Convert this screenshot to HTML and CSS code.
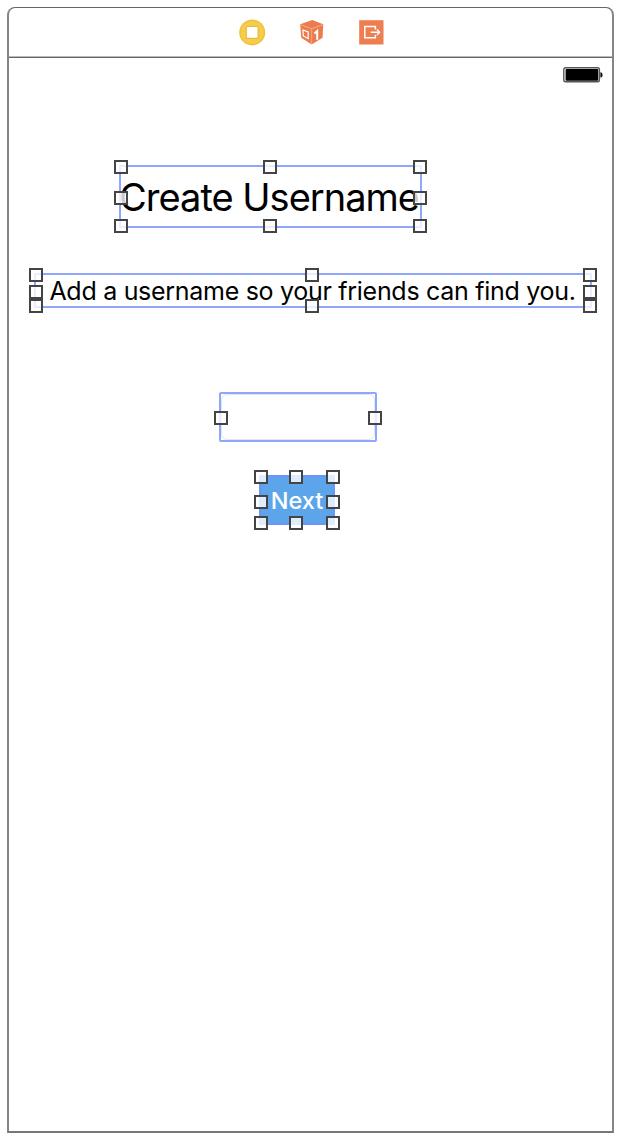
FILE: index.html
```html
<!DOCTYPE html>
<html lang="en">
<head>
<meta charset="utf-8">
<title>Create Username</title>
<link rel="stylesheet" href="styles.css">
</head>
<body>
<main class="scene">
  <header class="dock">
    <svg class="icon" viewBox="0 0 28 28">
      <circle cx="14.2" cy="13.4" r="13" fill="#eec23f"/>
      <circle cx="14.2" cy="13.4" r="11.4" fill="#f6cc4b"/>
      <rect x="7.7" y="6.9" width="13" height="13" rx="1.5" fill="#e6ba3e"/>
      <rect x="8.9" y="8.1" width="10.6" height="10.6" rx=".5" fill="#fff"/>
    </svg>
    <svg class="icon" viewBox="0 0 28 28">
      <path d="M14.2 1 25.3 5.2 24.5 18.8 13.7 25.4 3.2 18.8 2.2 5.2Z" fill="#ec7c4d"/>
      <path d="M2.4 5.6 13.7 9.7 25.1 5.6M13.7 9.7V25" fill="none" stroke="#f5ab8b" stroke-width="1"/>
      <path d="M5 11 10.2 12.9V19.6L5.3 17Z" fill="none" stroke="#fff" stroke-width="1.2"/>
      <path d="M16.4 14.4 19.2 12V20.8" fill="none" stroke="#fff" stroke-width="2"/>
    </svg>
    <svg class="icon" viewBox="0 0 28 28">
      <rect x="1.2" y="1.2" width="24.3" height="24.3" fill="#ed7e50"/>
      <path d="M17.4 10.6V7.6H6.8V18.8H17.4V15.8" fill="none" stroke="#fff" stroke-width="1.5"/>
      <path d="M12.8 13.2H21.2M19 10.5 21.7 13.2 19 15.9" fill="none" stroke="#fff" stroke-width="1.4"/>
    </svg>
  </header>
  <div class="status">
    <svg class="battery" viewBox="0 0 42 18">
      <rect x="1.8" y="1.8" width="35.6" height="14" rx="1.8" fill="#fff" stroke="#555" stroke-width="1.4"/>
      <rect x="3.6" y="3" width="32.6" height="11.8" rx=".8" fill="#000"/>
      <path d="M38.4 6.2h.6q1.6.7 1.6 2.7t-1.6 2.7h-.6z" fill="#111"/>
    </svg>
  </div>
  <section class="selection title">
    <h1 class="title-text">Create Username</h1>
    <i class="handle top left"></i><i class="handle top center"></i><i class="handle top right"></i>
    <i class="handle middle left"></i><i class="handle middle right"></i>
    <i class="handle bottom left"></i><i class="handle bottom center"></i><i class="handle bottom right"></i>
  </section>
  <section class="selection subtitle">
    <p class="subtitle-text">Add a username so your friends can find you.</p>
    <i class="handle top left"></i><i class="handle top center"></i><i class="handle top right"></i>
    <i class="handle middle left"></i><i class="handle middle right"></i>
    <i class="handle bottom left"></i><i class="handle bottom center"></i><i class="handle bottom right"></i>
  </section>
  <section class="selection field">
    <div class="field-shape"></div>
    <i class="handle middle left"></i><i class="handle middle right"></i>
  </section>
  <section class="selection next">
    <span class="next-text">Next</span>
    <i class="handle top left"></i><i class="handle top center"></i><i class="handle top right"></i>
    <i class="handle middle left"></i><i class="handle middle right"></i>
    <i class="handle bottom left"></i><i class="handle bottom center"></i><i class="handle bottom right"></i>
  </section>
</main>
</body>
</html>
```
FILE: styles.css
```css
* { box-sizing: border-box; }
html, body { margin: 0; background: #fff; }
body {
  height: 1140px;
  padding: 7px 8px 7px 7px;
  font-family: Inter, "Liberation Sans", sans-serif;
  color: #000;
}
.scene {
  display: flex;
  flex-direction: column;
  align-items: flex-start;
  height: 1126px;
  border: 2px solid #858585;
  border-top: 1px solid #666;
  border-bottom-color: #777;
  border-radius: 8px 8px 0 0;
}
.dock {
  display: flex;
  justify-content: center;
  align-items: center;
  gap: 32px;
  width: 100%;
  height: 50px;
  padding-left: 3px;
  border-bottom: 1px solid #666;
  box-shadow: 0 -1px 0 #bbb inset;
}
.icon { display: block; width: 28px; height: 28px; }
.status {
  display: flex;
  justify-content: flex-end;
  width: 100%;
  height: 107px;
  padding: 8px 8px 0 0;
}
.battery { width: 42px; height: 18px; }
.selection {
  position: relative;
  display: flex;
  justify-content: center;
  align-items: center;
  border: 2px solid #8ea6fd;
}
.title { width: 303px; height: 63px; margin-left: 110px; }
.title-text { margin: 0; padding-right: 3px; font-size: 38px; font-weight: 400; line-height: 46px; letter-spacing: -1px; white-space: nowrap; }
.subtitle { width: 558px; height: 35px; margin: 45px 0 0 25px; }
.subtitle-text { margin: 0; padding-right: 1px; font-size: 25px; line-height: 30px; letter-spacing: -.29px; white-space: nowrap; }
.field { width: 158px; height: 50px; margin: 84px 0 0 210px; border-radius: 2px; }
.field-shape { width: 154px; height: 46px; border: 1px solid #e6e6e6; border-radius: 6px; }
.next { width: 76px; height: 50px; margin: 33px 0 0 250px; background: #5ca5ea; border-color: #6a94fa; }
.next-text { padding-top: 2px; color: #fff; font-size: 23.5px; font-weight: 500; line-height: 30px; }

/* Resize handles straddle the selection outline. */
.handle {
  position: absolute;
  width: 14px;
  height: 14px;
  border: 2px solid #444;
  background: rgba(255, 255, 255, .8);
}
.top { top: -7px; }
.middle { top: 24px; }
.bottom { bottom: -7px; }
.left { left: -7px; }
.center { left: calc(50% - 8px); }
.right { right: -7px; }
.subtitle .middle { top: 10px; }
.field .middle { top: 17px; }
.next .middle { top: 18px; }
```
